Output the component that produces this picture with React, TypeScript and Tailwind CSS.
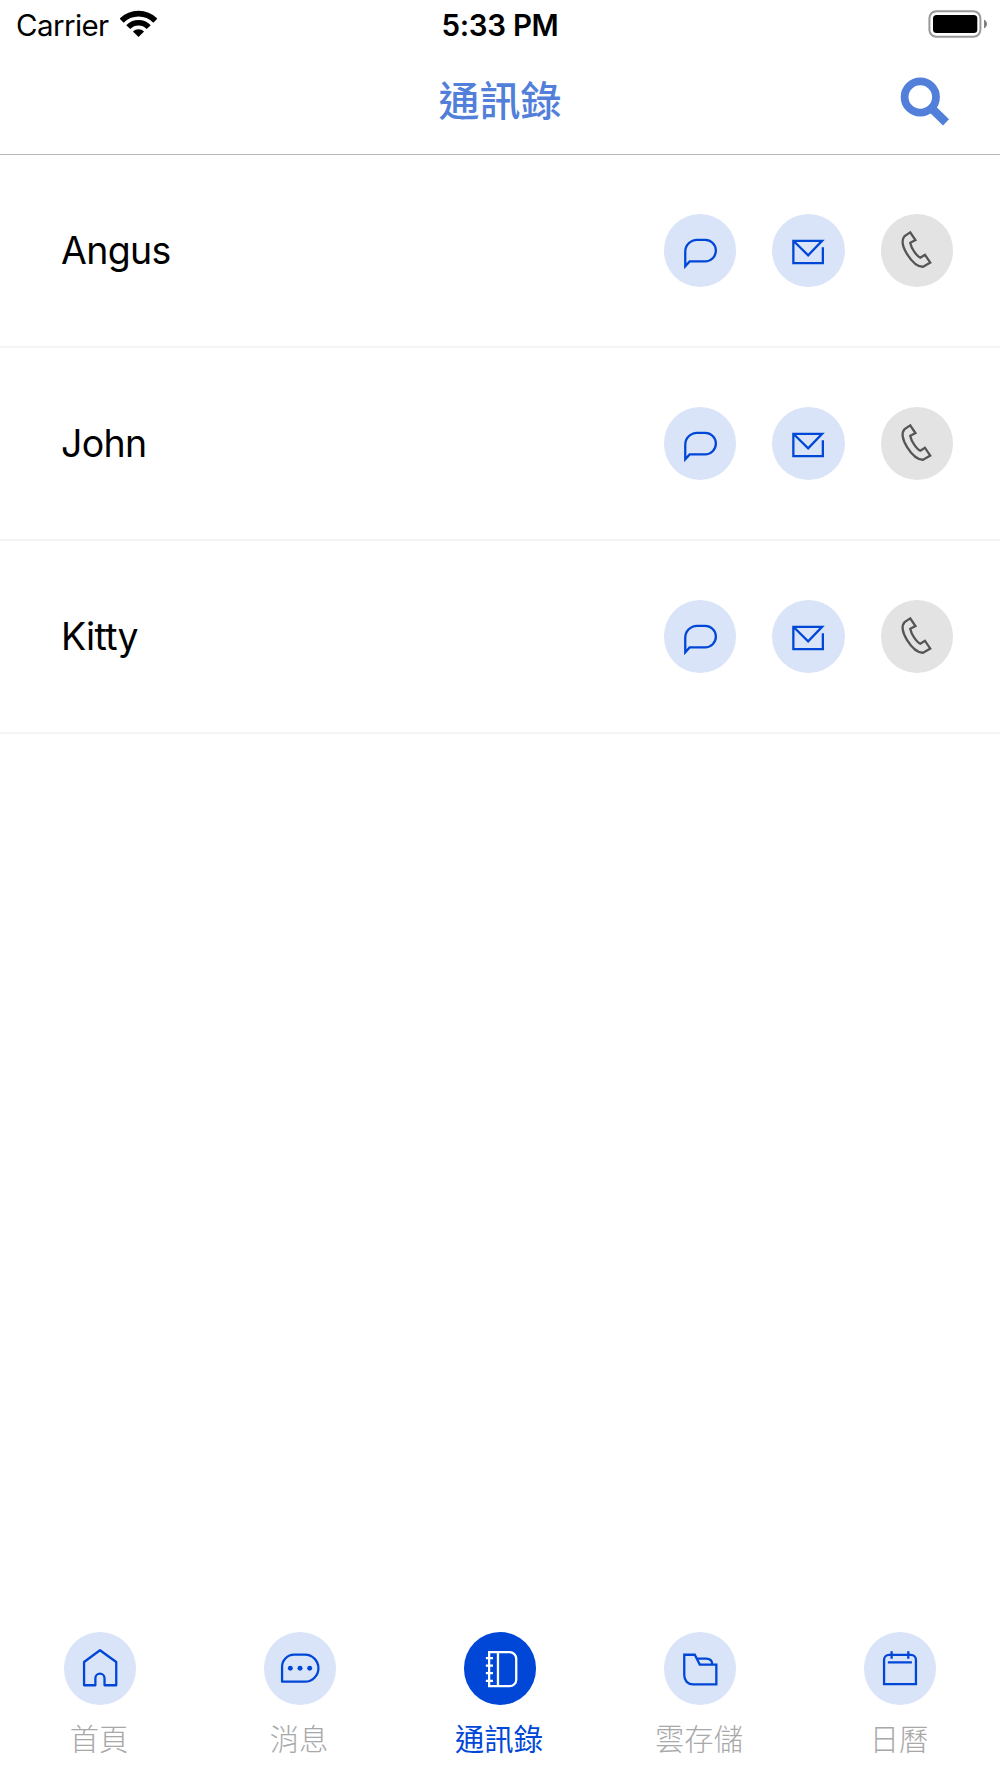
import type { ReactNode } from "react";
import clsx from "clsx";

type IconName = "chat" | "mail" | "phone" | "home" | "message" | "contacts" | "folder" | "calendar";

// All icons are drawn on a 73x73 canvas, the size of the round button
const ICONS: Record<IconName, ReactNode> = {
    chat: <path d="M21.4 52.6V38a12 12 0 0 1 12-12h8a10.85 10.85 0 0 1 0 21.7H25.8z" />,
    mail: <path d="M51.2 33.4V49.5H21.5V27.1H50.4L36.4 41.6L22 27.4" />,
    phone: <path d="M29.4 18.5L23.8 22.2C20.4 26 21.8 33 26.1 40.2C30.6 47.4 36.8 53.4 42.5 53.1L49.6 48.9L44.2 41L39.6 44C36.2 42.6 30.4 34.6 29.4 29L34.7 26.2z" />,
    home: <path strokeLinejoin="round" d="M36.2 18.4L52.6 30.2V53.6H40.8V46.6a4.6 4.6 0 0 0-9.2 0V53.6H20.2V30.2z" />,
    message: (
        <>
            <path strokeLinejoin="round" d="M18.2 50V35a12.2 12.2 0 0 1 12.2-12.2H41.2a13.6 13.6 0 0 1 0 27.2z" />
            <circle cx="26.5" cy="36.5" r="2.5" fill="currentColor" stroke="none" />
            <circle cx="36.3" cy="36.5" r="2.5" fill="currentColor" stroke="none" />
            <circle cx="46" cy="36.5" r="2.5" fill="currentColor" stroke="none" />
        </>
    ),
    contacts: <path d="M25.3 20.3H46a6.6 6.6 0 0 1 6.6 6.6V48a6.6 6.6 0 0 1-6.6 6.6H25.3zM34.2 20.3V54.6M22 26.3H29.2M22 33.9H29.2M22 41.5H29.2M22 49.2H29.2" />,
    folder: <path d="M20.4 22.9H31L36 32.8H52.7V52.8H29.4C24 52.8 20.4 49 20.4 43.6zM32.7 26.8H42.4C46 26.8 48.6 29 48.8 32.8" />,
    calendar: <path d="M20.2 52.5V28a5 5 0 0 1 5-5H47.3a5 5 0 0 1 5 5V52.5zM27.8 19.3V27M44.6 19.3V27M24 30.5H48.2" />,
};

function RoundIcon({ name, className }: { name: IconName; className: string }) {
    return (
        <span className={clsx("block h-[72.5px] w-[72.5px] shrink-0 rounded-full", className)}>
            <svg viewBox="0 0 73 73" className="h-full w-full" fill="none" stroke="currentColor" strokeWidth="2.3">
                {ICONS[name]}
            </svg>
        </span>
    );
}

function StatusBar() {
    return (
        <div className="grid h-[50px] grid-cols-3 items-center text-[29.5px] leading-none text-black">
            <div className="flex items-center gap-[11px] pl-4">
                <span className="pt-0.5 tracking-[-0.02em]">Carrier</span>
                <svg width="37" height="28" viewBox="0 0 38 28" fill="none" stroke="#000" className="-mt-0.5">
                    <path d="M1.7 10.6a24.2 24.2 0 0 1 34.6 0" strokeWidth="5.8" />
                    <path d="M8.5 17.2a14.6 14.6 0 0 1 21 0" strokeWidth="5.8" />
                    <path d="M19 27.3L13.3 21.7a8 8 0 0 1 11.4 0z" fill="#000" stroke="none" />
                </svg>
            </div>
            <span className="pt-0.5 text-center font-semibold tracking-[-0.01em]">5:33 PM</span>
            <svg width="60" height="28" viewBox="0 0 60 28" className="-mt-0.5 mr-[12.5px] justify-self-end">
                <rect x="1.4" y="1.2" width="51" height="25.6" rx="7" fill="none" stroke="#999" strokeWidth="2" />
                <rect x="5" y="5" width="44.3" height="18" rx="3.5" fill="#000" />
                <path d="M56 9.5c4 2 4 7 0 9z" fill="#808080" />
            </svg>
        </div>
    );
}

const PEOPLE = ["Angus", "John", "Kitty"];

const TABS: { label: string; icon: IconName; active?: boolean }[] = [
    { label: "首頁", icon: "home" },
    { label: "消息", icon: "message" },
    { label: "通訊錄", icon: "contacts", active: true },
    { label: "雲存儲", icon: "folder" },
    { label: "日曆", icon: "calendar" },
];

export default function App() {
    return (
        <div className="flex h-[1778px] w-[1000px] flex-col overflow-hidden bg-white font-['Inter','Noto_Sans_CJK_TC',sans-serif]">
            <header className="h-[155px] shrink-0 border-b border-[#b8b8b8]">
                <StatusBar />
                <div className="grid h-[101px] grid-cols-3 items-center text-[#527fd9]">
                    <span />
                    <h1 className="pt-px text-center text-[41px] font-medium leading-none">通訊錄</h1>
                    <button className="mr-[50px] justify-self-end pt-px" aria-label="搜尋">
                        <svg width="50" height="50" viewBox="0 0 50 50" fill="none" stroke="currentColor">
                            <circle cx="20.3" cy="21" r="15.7" strokeWidth="7.8" />
                            <path d="M30 30.7L33 33.7" strokeWidth="5" />
                            <path d="M33.2 33.9L46 46.4" strokeWidth="8.6" />
                        </svg>
                    </button>
                </div>
            </header>

            <main className="flex-1">
                {PEOPLE.map((name) => (
                    <div key={name} className="flex h-[193px] items-center justify-between border-b-2 border-[#f4f4f4] pl-[61px] pr-[47px]">
                        <span className="pt-0.5 text-[37.5px] tracking-[-0.018em] text-black">{name}</span>
                        <div className="flex gap-9">
                            <RoundIcon name="chat" className="bg-[#d9e4f8] text-[#0047d8]" />
                            <RoundIcon name="mail" className="bg-[#d9e4f8] text-[#0047d8]" />
                            <RoundIcon name="phone" className="bg-[#e3e3e3] text-[#555]" />
                        </div>
                    </div>
                ))}
            </main>

            <nav className="grid h-[146px] shrink-0 grid-cols-5">
                {TABS.map((tab) => (
                    <button key={tab.label} className="flex flex-col items-center gap-5">
                        <RoundIcon
                            name={tab.icon}
                            className={tab.active ? "bg-[#0047d8] text-white" : "bg-[#d9e4f8] text-[#0047d8]"}
                        />
                        <span className={clsx("pr-0.5 text-[29.3px] leading-[30px]", tab.active ? "text-[#0047d8]" : "font-light text-[#a8a8a8]")}>
                            {tab.label}
                        </span>
                    </button>
                ))}
            </nav>
        </div>
    );
}
